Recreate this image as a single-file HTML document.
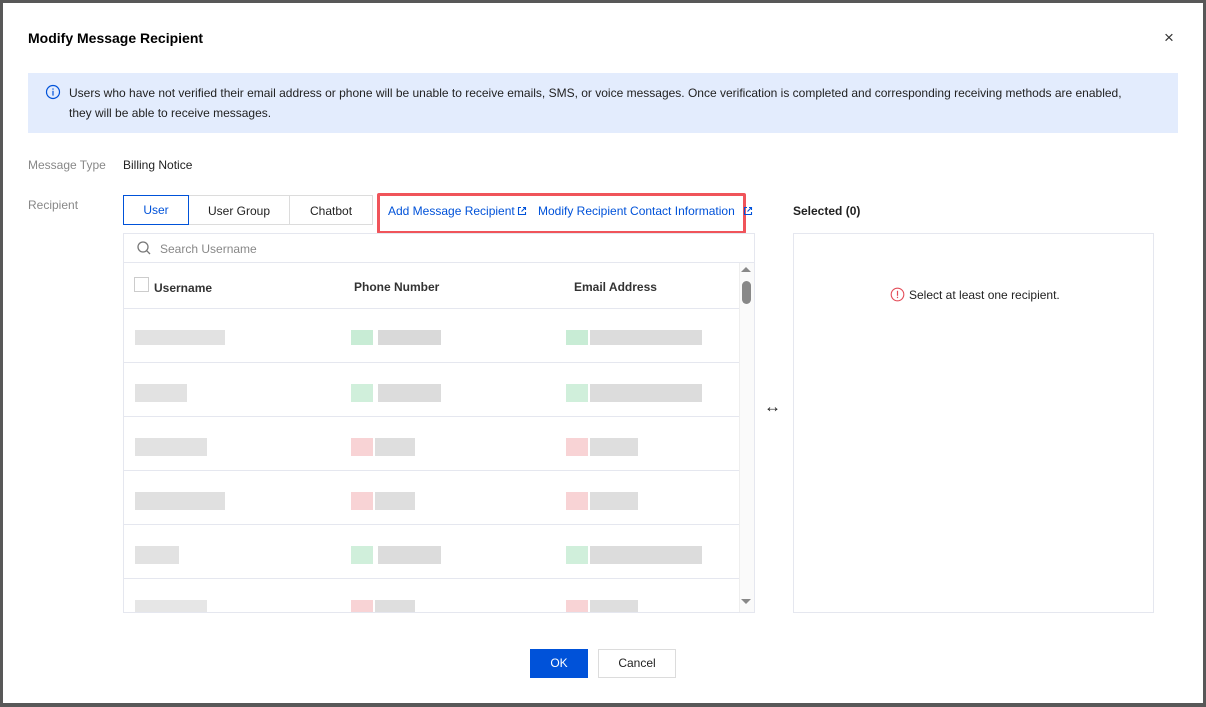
<!DOCTYPE html>
<html><head><meta charset="utf-8"><style>
*{margin:0;padding:0;box-sizing:border-box}
body{width:1206px;height:707px;background:#585858;font-family:"Liberation Sans",Arial,sans-serif;position:relative;overflow:hidden;font-size:12px;color:#000}
.dlg{position:absolute;left:3px;top:3px;width:1200px;height:700px;background:#fff}
.a{position:absolute}
.t{white-space:nowrap}
.line{position:absolute;background:#e5e7ef}
.g{position:absolute;height:8px}
</style></head><body>
<div class="dlg"></div>
<div class="a t" style="left:28px;top:30px;font-size:14px;font-weight:bold;color:#000">Modify Message Recipient</div>
<div class="a t" style="left:1164px;top:28px;font-size:17px;color:#333">×</div>
<div class="a" style="left:28px;top:73px;width:1150px;height:60px;background:#e3ecfd"></div>
<svg class="a" style="left:45px;top:84px" width="16" height="16" viewBox="0 0 16 16"><circle cx="8" cy="8" r="6.5" fill="none" stroke="#0052d9" stroke-width="1.2"/><rect x="7.4" y="6.8" width="1.2" height="4.8" fill="#0052d9"/><rect x="7.4" y="4.4" width="1.2" height="1.3" fill="#0052d9"/></svg>
<div class="a" style="left:69px;top:83px;font-size:12px;line-height:20px;color:#222;width:1058px">Users who have not verified their email address or phone will be unable to receive emails, SMS, or voice messages. Once verification is completed and corresponding receiving methods are enabled, they will be able to receive messages.</div>
<div class="a t" style="left:28px;top:158px;color:#888">Message Type</div>
<div class="a t" style="left:123px;top:158px;color:#222">Billing Notice</div>
<div class="a t" style="left:28px;top:198px;color:#888">Recipient</div>
<div class="a" style="left:123px;top:195px;width:250px;height:30px;border:1px solid #dcdcdc"></div>
<div class="a" style="left:289px;top:195px;width:1px;height:30px;background:#dcdcdc"></div>
<div class="a" style="left:123px;top:195px;width:66px;height:30px;border:1px solid #0052d9;color:#0052d9;text-align:center;line-height:28px">User</div>
<div class="a t" style="left:208px;top:204px;color:#222">User Group</div>
<div class="a t" style="left:310px;top:204px;color:#222">Chatbot</div>
<div class="a" style="left:377px;top:193px;width:369px;height:41px;border:3px solid #f0545a;border-radius:2px"></div>
<div class="a t" style="left:388px;top:204px;color:#0052d9">Add Message Recipient</div>
<svg class="a" style="left:517px;top:206px" width="10" height="10" viewBox="0 0 10 10"><path d="M4 1.5H1.5v7h7V6M6 1.5h2.5V4M8.5 1.5L4.5 5.5" fill="none" stroke="#0052d9" stroke-width="1.1"/></svg>
<div class="a t" style="left:538px;top:204px;color:#0052d9">Modify Recipient Contact Information</div>
<svg class="a" style="left:743px;top:206px" width="10" height="10" viewBox="0 0 10 10"><path d="M4 1.5H1.5v7h7V6M6 1.5h2.5V4M8.5 1.5L4.5 5.5" fill="none" stroke="#0052d9" stroke-width="1.1"/></svg>
<div class="a" style="left:123px;top:233px;width:632px;height:380px;border:1px solid #e5e7ef"></div>
<svg class="a" style="left:136px;top:240px" width="16" height="16" viewBox="0 0 16 16"><circle cx="7" cy="7" r="5" fill="none" stroke="#777" stroke-width="1.3"/><path d="M10.7 10.7L14 14" stroke="#777" stroke-width="1.3"/></svg>
<div class="a t" style="left:160px;top:242px;color:#888">Search Username</div>
<div class="line" style="left:124px;top:262px;width:630px;height:1px"></div>
<div class="a" style="left:739px;top:263px;width:15px;height:349px;background:#fafafa;border-left:1px solid #eee"></div>
<div class="a" style="left:741px;top:267px;width:0;height:0;border-left:5px solid transparent;border-right:5px solid transparent;border-bottom:5px solid #888"></div>
<div class="a" style="left:742px;top:281px;width:9px;height:23px;background:#888;border-radius:5px"></div>
<div class="a" style="left:741px;top:599px;width:0;height:0;border-left:5px solid transparent;border-right:5px solid transparent;border-top:5px solid #888"></div>
<div class="a" style="left:134px;top:277px;width:15px;height:15px;border:1px solid #ccc"></div>
<div class="a t" style="left:154px;top:281px;font-weight:bold;color:#333">Username</div>
<div class="a t" style="left:354px;top:280px;font-weight:bold;color:#333">Phone Number</div>
<div class="a t" style="left:574px;top:280px;font-weight:bold;color:#333">Email Address</div>
<div class="line" style="left:124px;top:308px;width:615px;height:1px"></div>
<div class="line" style="left:124px;top:362px;width:615px;height:1px"></div>
<div class="line" style="left:124px;top:416px;width:615px;height:1px"></div>
<div class="line" style="left:124px;top:470px;width:615px;height:1px"></div>
<div class="line" style="left:124px;top:524px;width:615px;height:1px"></div>
<div class="line" style="left:124px;top:578px;width:615px;height:1px"></div>
<div class="g" style="left:135px;top:330px;width:90px;height:15px;background:#e2e2e2"></div>
<div class="g" style="left:351px;top:330px;width:22px;height:15px;background:#c8ecd5"></div>
<div class="g" style="left:378px;top:330px;width:63px;height:15px;background:#d9d9d9"></div>
<div class="g" style="left:566px;top:330px;width:22px;height:15px;background:#c8ecd5"></div>
<div class="g" style="left:590px;top:330px;width:112px;height:15px;background:#dcdcdc"></div>
<div class="g" style="left:135px;top:384px;width:52px;height:18px;background:#e2e2e2"></div>
<div class="g" style="left:351px;top:384px;width:22px;height:18px;background:#d0efdb"></div>
<div class="g" style="left:378px;top:384px;width:63px;height:18px;background:#dcdcdc"></div>
<div class="g" style="left:566px;top:384px;width:22px;height:18px;background:#d0efdb"></div>
<div class="g" style="left:590px;top:384px;width:112px;height:18px;background:#dcdcdc"></div>
<div class="g" style="left:135px;top:438px;width:72px;height:18px;background:#e2e2e2"></div>
<div class="g" style="left:351px;top:438px;width:22px;height:18px;background:#f8d3d5"></div>
<div class="g" style="left:375px;top:438px;width:40px;height:18px;background:#dedede"></div>
<div class="g" style="left:566px;top:438px;width:22px;height:18px;background:#f8d3d5"></div>
<div class="g" style="left:590px;top:438px;width:48px;height:18px;background:#dedede"></div>
<div class="g" style="left:135px;top:492px;width:90px;height:18px;background:#e0e0e0"></div>
<div class="g" style="left:351px;top:492px;width:22px;height:18px;background:#f8d3d5"></div>
<div class="g" style="left:375px;top:492px;width:40px;height:18px;background:#dedede"></div>
<div class="g" style="left:566px;top:492px;width:22px;height:18px;background:#f8d3d5"></div>
<div class="g" style="left:590px;top:492px;width:48px;height:18px;background:#dedede"></div>
<div class="g" style="left:135px;top:546px;width:44px;height:18px;background:#e2e2e2"></div>
<div class="g" style="left:351px;top:546px;width:22px;height:18px;background:#d0efdb"></div>
<div class="g" style="left:378px;top:546px;width:63px;height:18px;background:#dcdcdc"></div>
<div class="g" style="left:566px;top:546px;width:22px;height:18px;background:#d0efdb"></div>
<div class="g" style="left:590px;top:546px;width:112px;height:18px;background:#dcdcdc"></div>
<div class="g" style="left:135px;top:600px;width:72px;height:12px;background:#e6e6e6"></div>
<div class="g" style="left:351px;top:600px;width:22px;height:12px;background:#f8d3d5"></div>
<div class="g" style="left:375px;top:600px;width:40px;height:12px;background:#dedede"></div>
<div class="g" style="left:566px;top:600px;width:22px;height:12px;background:#f8d3d5"></div>
<div class="g" style="left:590px;top:600px;width:48px;height:12px;background:#dedede"></div>
<div class="a t" style="left:764px;top:397px;font-size:17px;font-weight:bold;color:#222">↔</div>
<div class="a t" style="left:793px;top:204px;font-weight:bold;color:#222">Selected (0)</div>
<div class="a" style="left:793px;top:233px;width:361px;height:380px;border:1px solid #e5e7ef"></div>
<svg class="a" style="left:890px;top:287px" width="15" height="15" viewBox="0 0 15 15"><circle cx="7.5" cy="7.5" r="6.3" fill="none" stroke="#e34d59" stroke-width="1.1"/><rect x="6.9" y="3.8" width="1.2" height="5" fill="#e34d59"/><rect x="6.9" y="9.8" width="1.2" height="1.3" fill="#e34d59"/></svg>
<div class="a t" style="left:909px;top:288px;color:#222">Select at least one recipient.</div>
<div class="a" style="left:530px;top:649px;width:58px;height:29px;background:#0052d9;color:#fff;text-align:center;line-height:29px">OK</div>
<div class="a" style="left:598px;top:649px;width:78px;height:29px;border:1px solid #dcdcdc;color:#222;text-align:center;line-height:27px">Cancel</div>
</body></html>
